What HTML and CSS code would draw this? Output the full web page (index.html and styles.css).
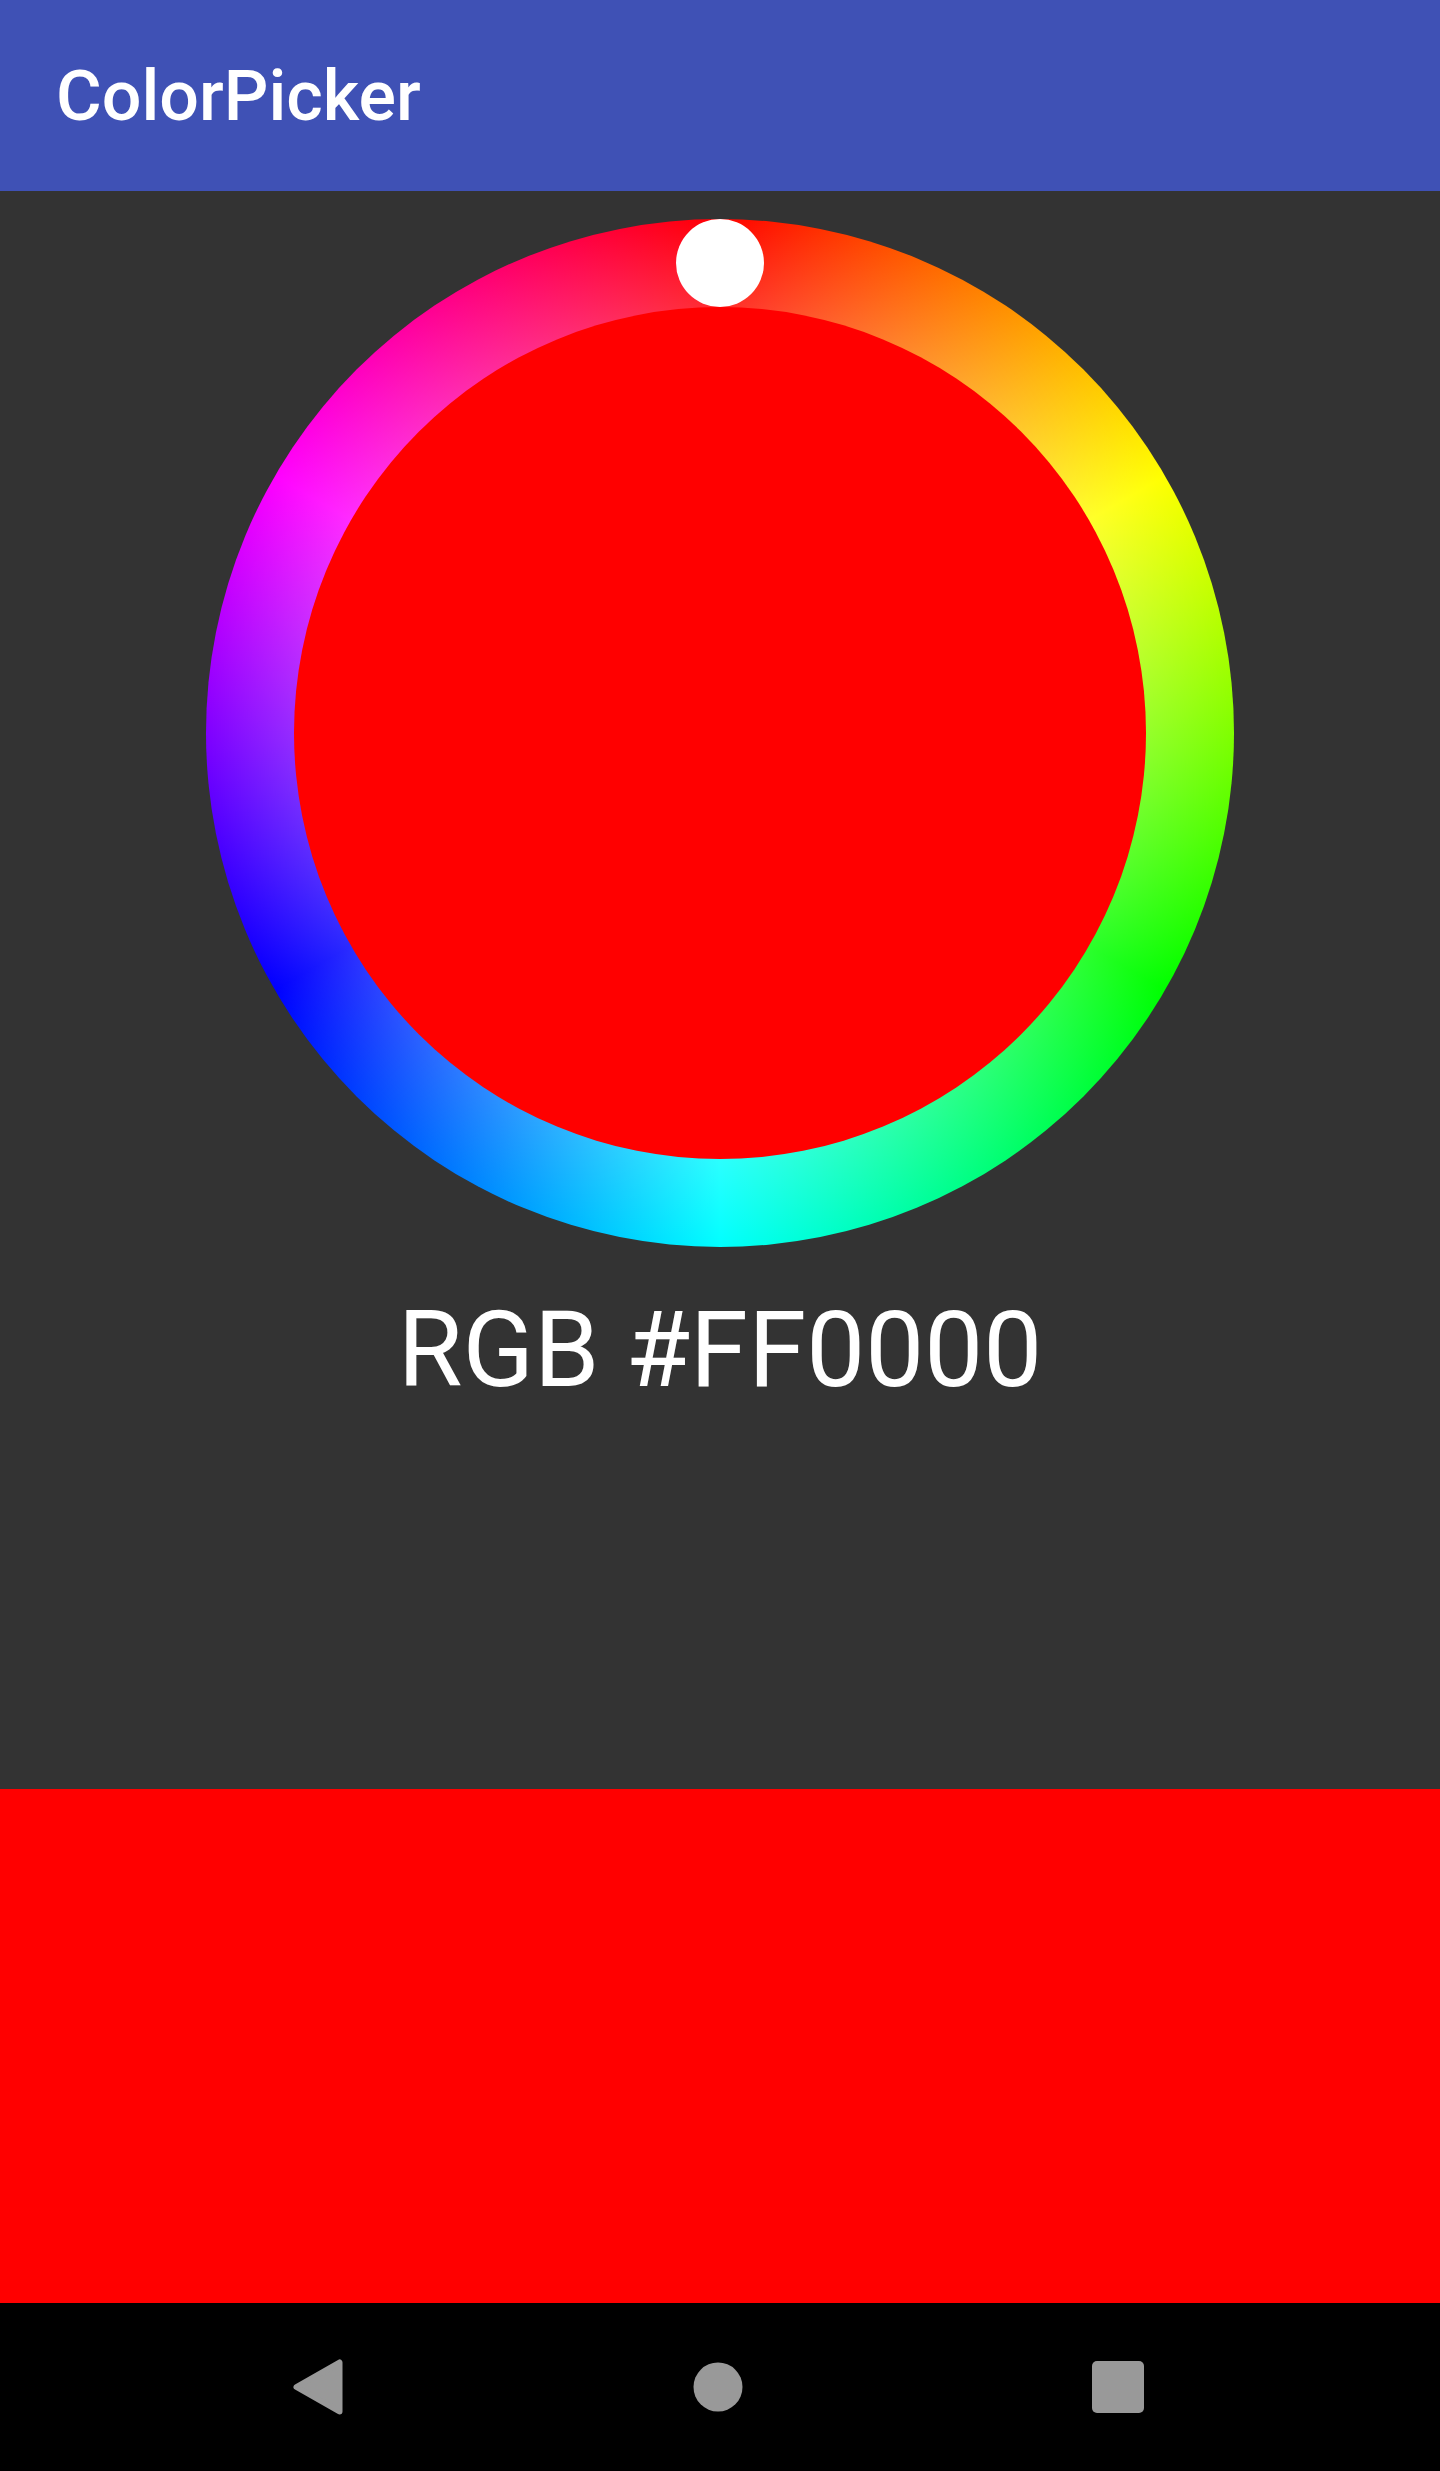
FILE: index.html
```html
<!DOCTYPE html>
<html>
<head>
<meta charset="utf-8">
<title>ColorPicker</title>
<link rel="stylesheet" href="styles.css">
</head>
<body>
<div class="app">
  <header class="toolbar">
    <h1 class="title">ColorPicker</h1>
  </header>
  <main class="content">
    <div class="wheel">
      <div class="swatch"></div>
      <div class="thumb"></div>
    </div>
    <p class="rgb">RGB #FF0000</p>
  </main>
  <section class="preview"></section>
  <nav class="navbar">
    <svg class="nav-icon" viewBox="0 0 60 60" width="60" height="60">
      <polygon points="51.5,5.5 51.5,54.5 8.5,30" fill="#999999" stroke="#999999" stroke-width="6" stroke-linejoin="round"/>
    </svg>
    <svg class="nav-icon" viewBox="0 0 60 60" width="60" height="60">
      <circle cx="30" cy="30" r="24.5" fill="#999999"/>
    </svg>
    <svg class="nav-icon" viewBox="0 0 60 60" width="60" height="60">
      <rect x="4" y="4" width="52" height="52" rx="5" fill="#999999"/>
    </svg>
  </nav>
</div>
</body>
</html>
```

FILE: styles.css
```css
html, body {
  margin: 0;
  padding: 0;
  background: #000;
}

.app {
  width: 1440px;
  height: 2471px;
  display: flex;
  flex-direction: column;
  font-family: Roboto, "Liberation Sans", sans-serif;
}

.toolbar {
  height: 191px;
  background: #3f51b5;
  display: flex;
  align-items: center;
  padding-left: 56px;
  box-sizing: border-box;
  flex: none;
}

.title {
  margin: 0;
  color: #ffffff;
  font-size: 70px;
  font-weight: 500;
  line-height: normal;
  letter-spacing: 0;
}

.content {
  height: 1598px;
  background: #333333;
  display: flex;
  flex-direction: column;
  align-items: center;
  padding-top: 28px;
  box-sizing: border-box;
  flex: none;
}

.wheel {
  position: relative;
  width: 1028px;
  height: 1028px;
  border-radius: 50%;
  background:
    radial-gradient(circle closest-side, rgba(255,255,255,0.18) 82%, rgba(255,255,255,0) 100%),
    conic-gradient(from 0deg, #ff0000, #ffff00 60deg, #00ff00 120deg, #00ffff 180deg, #0000ff 240deg, #ff00ff 300deg, #ff0000 360deg);
  display: flex;
  align-items: center;
  justify-content: center;
  margin-left: -1px;
}

.swatch {
  width: 852px;
  height: 852px;
  border-radius: 50%;
  background: #ff0000;
}

.thumb {
  position: absolute;
  top: 0;
  left: 470px;
  width: 88px;
  height: 88px;
  border-radius: 50%;
  background: #ffffff;
}

.rgb {
  margin: 42px 0 0 0;
  color: #ffffff;
  font-size: 105px;
  font-weight: 400;
  line-height: normal;
}

.preview {
  height: 514px;
  background: #ff0000;
  flex: none;
}

.navbar {
  height: 168px;
  background: #000000;
  display: flex;
  align-items: center;
  padding-left: 288px;
  column-gap: 340px;
  flex: none;
}

.nav-icon {
  display: block;
  flex: none;
}
```
